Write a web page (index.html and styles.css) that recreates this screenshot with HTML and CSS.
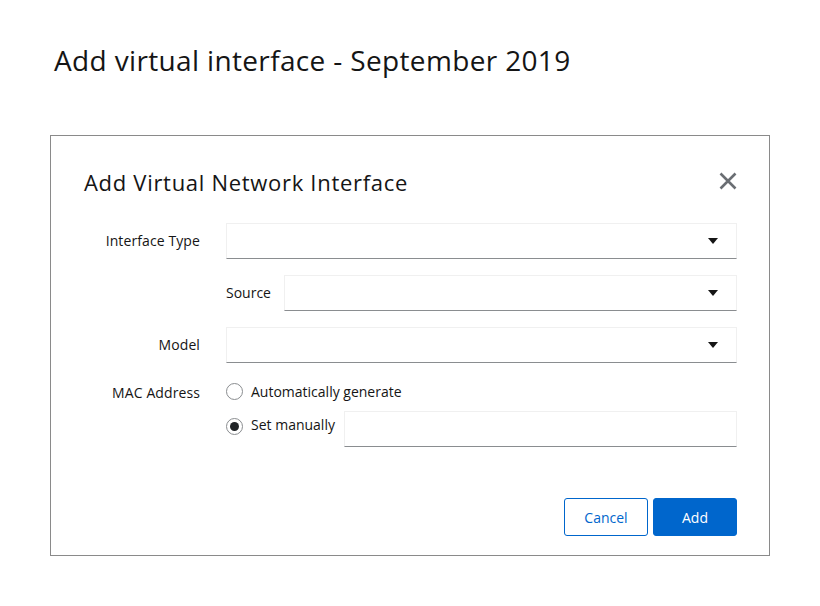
FILE: index.html
```html
<!DOCTYPE html>
<html>
<head>
<meta charset="utf-8">
<link rel="stylesheet" href="styles.css">
</head>
<body>
<h1 class="page-title">Add virtual interface - September 2019</h1>
<div class="dialog">
  <div class="dialog-head">
    <h2 class="dialog-title">Add Virtual Network Interface</h2>
    <svg class="close" width="18" height="18" viewBox="0 0 18 18"><path d="M1.5 1.5 L16.5 16.5 M16.5 1.5 L1.5 16.5" stroke="#6a6e73" stroke-width="2.6" stroke-linecap="butt"/></svg>
  </div>
  <div class="form">
    <div class="label">Interface Type</div>
    <div class="select"><span class="caret"></span></div>

    <div class="label"></div>
    <div class="sub-row">
      <span class="sub-label">Source</span>
      <div class="select grow"><span class="caret"></span></div>
    </div>

    <div class="label">Model</div>
    <div class="select"><span class="caret"></span></div>

    <div class="label mac">MAC Address</div>
    <div class="radios">
      <div class="radio-row first">
        <span class="radio"></span>
        <span class="radio-text">Automatically generate</span>
      </div>
      <div class="radio-row second">
        <span class="radio checked"></span>
        <span class="radio-text">Set manually</span>
        <div class="input"></div>
      </div>
    </div>
  </div>
  <div class="actions">
    <button class="btn secondary">Cancel</button>
    <button class="btn primary">Add</button>
  </div>
</div>
</body>
</html>
```
FILE: styles.css
```css
* { box-sizing: border-box; }
body {
  margin: 0;
  background: #fff;
  font-family: "Open Sans", "Noto Sans", sans-serif;
  color: #151515;
}
.page-title {
  margin: 0;
  padding: 40px 0 0 54px;
  font-size: 28px;
  font-weight: 400;
  line-height: 40px;
  letter-spacing: 0.35px;
}
.dialog {
  margin: 55px 0 0 50px;
  width: 720px;
  height: 421px;
  border: 1px solid #8a8a8a;
  padding: 0 32px 0 33px;
  display: flex;
  flex-direction: column;
}
.dialog-head {
  display: flex;
  align-items: center;
  justify-content: space-between;
  height: 30px;
  margin-top: 32px;
}
.dialog-title {
  margin: 0;
  font-size: 22px;
  font-weight: 400;
  letter-spacing: 0.7px;
  position: relative;
  top: -1px;
}
.close { margin-right: 0; position: relative; top: -2px; }
.form {
  margin-top: 25px;
  display: grid;
  grid-template-columns: 116px 1fr;
  column-gap: 26px;
  row-gap: 16px;
  font-size: 14px;
}
.label {
  text-align: right;
  align-self: center;
  letter-spacing: 0.1px;
  margin-top: -2px;
}
.label.mac { align-self: start; margin-top: 4px; }
.sub-label { margin-top: -2px; }
.select, .input {
  height: 36px;
  border: 1px solid #f0f0f0;
  border-bottom-color: #8a8d90;
  position: relative;
  background: #fff;
}
.caret {
  position: absolute;
  right: 18px;
  top: 14px;
  width: 0; height: 0;
  border-left: 5px solid transparent;
  border-right: 5px solid transparent;
  border-top: 6px solid #151515;
}
.sub-row {
  display: flex;
  align-items: center;
  gap: 13px;
}
.grow { flex: 1; }
.radios {
  display: flex;
  flex-direction: column;
  gap: 7px;
}
.radio-row {
  display: flex;
  align-items: flex-start;
}
.radio-row.first { height: 25px; align-items: center; }
.radio-row.second { height: 36px; }
.radio-row.second .radio { margin-top: 7px; }
.radio-row.second .radio-text { margin-top: 4px; }
.radio {
  width: 17px; height: 17px;
  border: 1px solid #8a8d90;
  border-radius: 50%;
  margin-right: 8px;
  position: relative;
  flex: none;
}
.radio.checked::after {
  content: "";
  position: absolute;
  left: 3px; top: 3px;
  width: 9px; height: 9px;
  border-radius: 50%;
  background: #212427;
}
.radio-text { margin-right: 9px; line-height: 20px; }
.radio-row .input { flex: 1; height: 36px; }
.actions {
  margin-top: auto;
  margin-bottom: 19px;
  display: flex;
  justify-content: flex-end;
  gap: 5px;
}
.btn {
  width: 84px;
  height: 38px;
  border-radius: 3px;
  font-family: inherit;
  font-size: 14px;
}
.secondary {
  background: #fff;
  border: 1px solid #0066cc;
  color: #0066cc;
}
.primary {
  background: #0066cc;
  border: 1px solid #0066cc;
  color: #fff;
}
```
